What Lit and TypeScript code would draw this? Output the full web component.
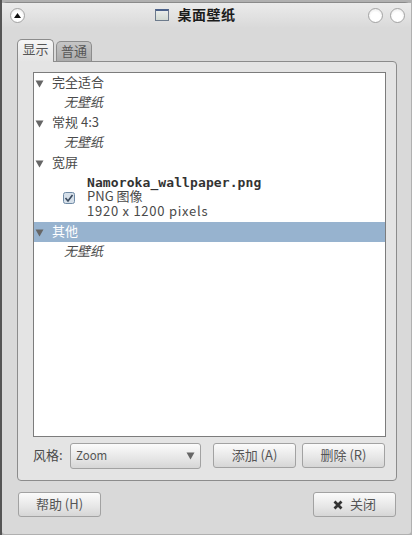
import { LitElement, html, css, svg } from "lit";
import { customElement } from "lit/decorators.js";

const arrow = svg`<svg class="arrow" width="9" height="8" viewBox="0 0 9 8"><path d="M0.500 0.500h8L4.500 7.500z" fill="#666"/></svg>`;

@customElement("app-root")
export class AppRoot extends LitElement {
  static styles = css`
    :host { display: block; width: 412px; height: 535px; overflow: hidden;
      background: linear-gradient(90deg, #555 0 2px, #b0b0b0 2px);
      font-family: "Noto Sans CJK SC", "DejaVu Sans", sans-serif; font-size: 13px; color: #4a4a4a; }
    * { box-sizing: border-box; }
    .win { margin: 2px 1px 0 2px; height: 532px; background: #d9d9d9; border-radius: 5px 6px 3px 3px;
      border-top: 1px solid #8a8a8a; display: flex; flex-direction: column; }
    .title { height: 25px; flex: none; background: linear-gradient(#ebebeb, #d9d9d9); display: flex; align-items: center;
      padding: 0 6px 0 8px; }
    .orb { width: 15px; height: 15px; border-radius: 50%; border: 1px solid #a4a4a4; flex: none;
      background: radial-gradient(circle at 50% 60%, #fff 45%, #e2e2e2); display: flex; align-items: center; justify-content: center; }
    .center { flex: 1; display: flex; align-items: center; justify-content: center; gap: 9px; padding-right: 3px; }
    .wicon { width: 14px; height: 12px; margin-bottom: 1px; border: 1px solid #6d7b8c; border-top: 2px solid #4c628a; background: linear-gradient(#e9edea, #d2d9d2); }
    .ttl { font-weight: 700; font-size: 14px; color: #1c1c1c; letter-spacing: 0.5px; padding-bottom: 3px; }
    .orbs { display: flex; gap: 7px; }
    .body { flex: 1; padding: 11px 13px 15px 15px; display: flex; flex-direction: column; }
    .tabs { display: flex; height: 23px; gap: 2px; flex: none; align-items: flex-end; position: relative; z-index: 1; margin-bottom: -1px; }
    .tab { width: 36px; border: 1px solid #8c8c8c; border-bottom: none; border-radius: 5px 5px 0 0; text-align: center;
      line-height: 18px; color: #555; }
    .tab.on { height: 23px; width: 37px; background: linear-gradient(#f6f6f6, #e4e4e4); }
    .tab.off { height: 20px; background: linear-gradient(#c6c6c6, #ababab); margin-bottom: 1px; }
    .panel { height: 420px; width: 380px; flex: none; background: #e4e4e4; border: 1px solid #8c8c8c; border-radius: 0 4px 4px 4px;
      padding: 10px 10px 11px 15px; display: flex; flex-direction: column; }
    .tree { height: 365px; flex: none; background: #fff; border: 1px solid #7c7c7c; }
    .row { height: 20px; display: flex; align-items: center; padding: 0 0 4px 1px; }
    .arrow { flex: none; margin: 6px 8px 0 0; }
    .sub { height: 20px; display: flex; align-items: center; padding: 0 0 4px 30px; font-style: italic; }
    .row.sel { background: #97b3cf; color: #fff; }
    .item { height: 49px; display: flex; align-items: center; padding-left: 29px; }
    .check { flex: none; margin-right: 12px; }
    .meta { display: flex; flex-direction: column; line-height: 14.5px; }
    .name { font-weight: 700; font-family: "DejaVu Sans Mono", monospace; letter-spacing: 0.1px; color: #333; margin-bottom: -2px; }
    .kind { margin-bottom: 1px; }
    .size { letter-spacing: 0.75px; }
    .controls { display: flex; align-items: center; margin-top: 6px; height: 26px; }
    .label { width: 37px; flex: none; padding-bottom: 3px; }
    .btn { border: 1px solid #a2a2a2; border-radius: 3px; background: linear-gradient(#fbfbfb, #e6e6e6 60%, #d6d6d6);
      display: flex; align-items: center; justify-content: center; height: 25px; padding-bottom: 2px; color: #555; flex: none; }
    .combo { width: 131px; justify-content: space-between; padding: 0 5px; height: 26px; margin-right: 12px; font-size: 11.5px; }
    .combo span { margin-bottom: 2px; }
    .combo .arrow { margin: 0; }
    .w83 { width: 83px; }
    .add { margin-right: 6px; }
    .controls .w83 { align-self: flex-start; }
    .foot { display: flex; justify-content: space-between; margin-top: 11px; padding: 0 2px 0 1px; }
    .x { margin: 2px 7px 0 0; }
  `;

  render() {
    return html`<div class="win">
      <div class="title">
        <div class="orb"><svg width="7" height="5" viewBox="0 0 7 5"><path d="M3.500 0L7 5H0z" fill="#111"/></svg></div>
        <div class="center"><span class="wicon"></span><span class="ttl">桌面壁纸</span></div>
        <div class="orbs"><div class="orb"></div><div class="orb"></div></div>
      </div>
      <div class="body">
        <div class="tabs"><div class="tab on">显示</div><div class="tab off">普通</div></div>
        <div class="panel">
          <div class="tree">
            <div class="row">${arrow}完全适合</div>
            <div class="sub">无壁纸</div>
            <div class="row">${arrow}常规 4:3</div>
            <div class="sub">无壁纸</div>
            <div class="row">${arrow}宽屏</div>
            <div class="item">
              <svg class="check" width="12" height="12" viewBox="0 0 12 12"><rect x="0.500" y="0.500" width="11" height="11" rx="2" fill="#d5dfe9" stroke="#6f8aa5"/><path d="M2.500 6l2.500 3L9.500 3" fill="none" stroke="#3a4a5e" stroke-width="1.600"/></svg>
              <div class="meta"><span class="name">Namoroka_wallpaper.png</span><span class="kind">PNG 图像</span><span class="size">1920 x 1200 pixels</span></div>
            </div>
            <div class="row sel">${arrow}其他</div>
            <div class="sub">无壁纸</div>
          </div>
          <div class="controls">
            <span class="label">风格:</span>
            <div class="btn combo"><span>Zoom</span>${arrow}</div>
            <div class="btn w83 add">添加 (A)</div>
            <div class="btn w83">删除 (R)</div>
          </div>
        </div>
        <div class="foot">
          <div class="btn w83">帮助 (H)</div>
          <div class="btn w83"><svg class="x" width="10" height="10" viewBox="0 0 10 10"><path d="M1.500 1.500l7 7M8.500 1.500l-7 7" stroke="#333" stroke-width="2.800"/></svg>关闭</div>
        </div>
      </div>
    </div>`;
  }
}
